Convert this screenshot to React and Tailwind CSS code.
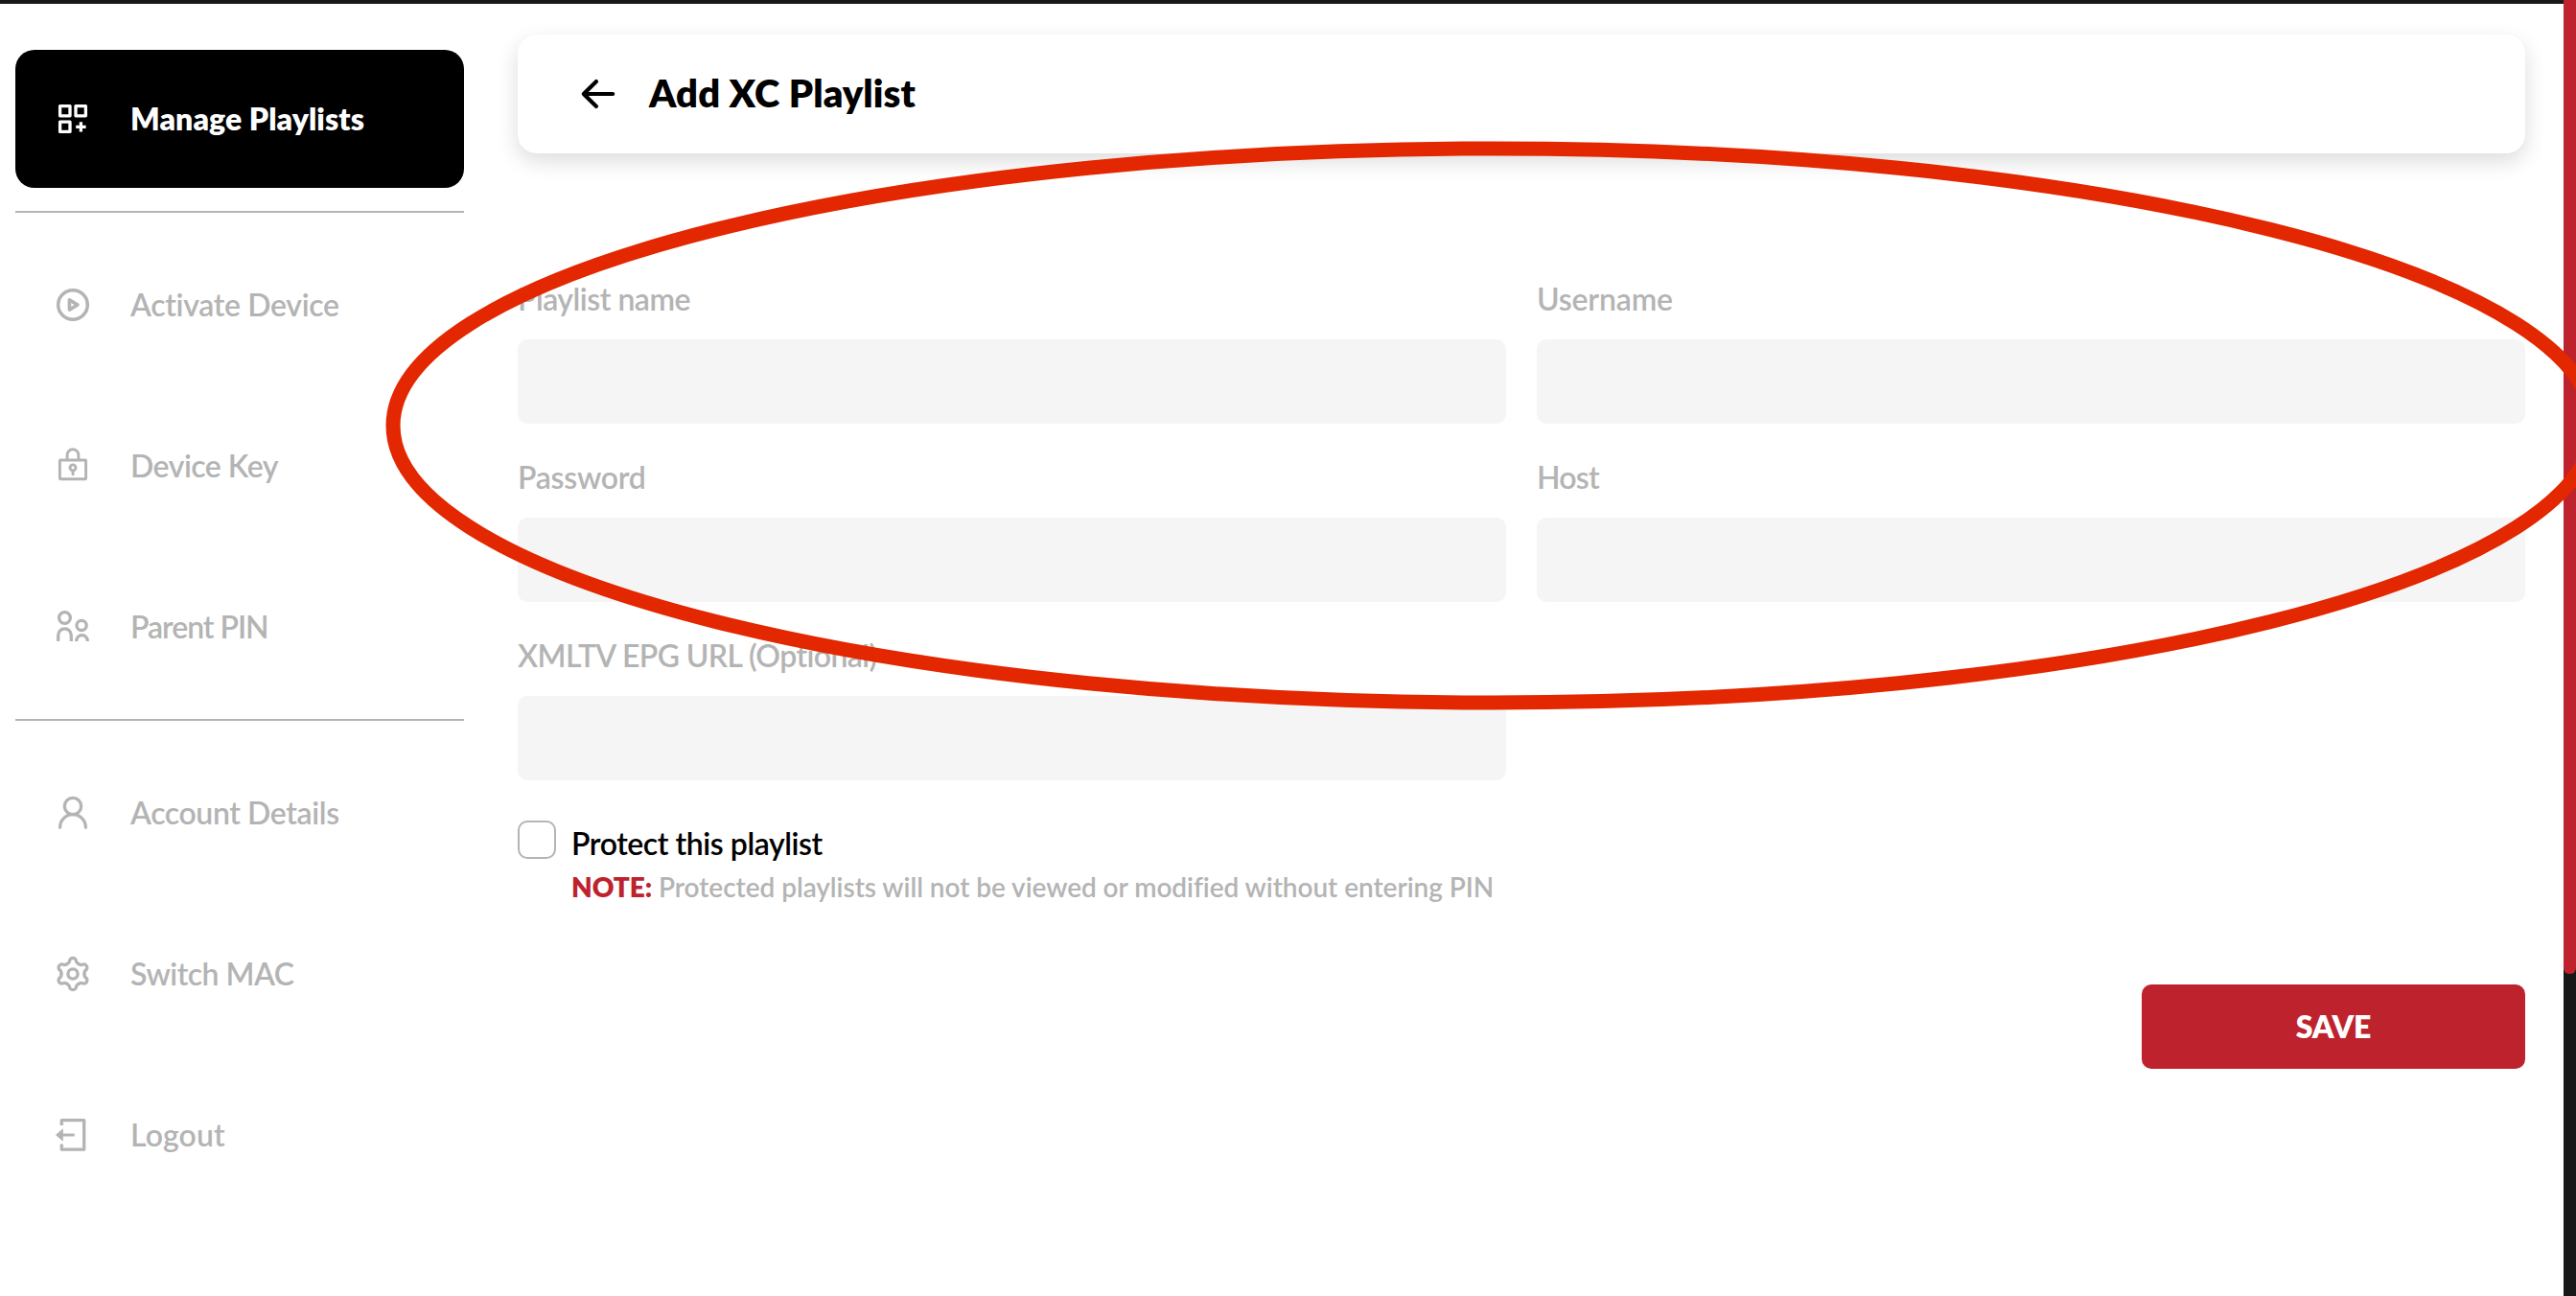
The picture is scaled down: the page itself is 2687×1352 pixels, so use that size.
import React from "react";

function Icon({ children, ...rest }) {
  return (
    <svg
      className="size-10 shrink-0 overflow-visible"
      viewBox="0 0 40 40"
      fill="none"
      stroke="currentColor"
      strokeWidth="3.3"
      strokeLinejoin="round"
      aria-hidden="true"
      {...rest}
    >
      {children}
    </svg>
  );
}

const PlaylistsIcon = () => (
  <Icon>
    <rect x="6.6" y="6.6" width="10.4" height="10.2" />
    <rect x="23" y="6.6" width="10.4" height="10.2" />
    <rect x="6.6" y="23.2" width="10.4" height="10.2" />
    <path d="M28.4 23.2v10.4M23.2 28.4h10.4" />
  </Icon>
);

const PlayIcon = () => (
  <Icon strokeWidth="3.5">
    <circle cx="20" cy="20" r="15.3" />
    <path d="M16.4 14.9v10.2L25 20z" strokeWidth="3.6" />
  </Icon>
);

const LockIcon = () => (
  <Icon strokeWidth="2.9">
    <rect x="6.4" y="14" width="27.2" height="19.7" rx="0.6" />
    <path d="M14.1 14V8.7a5.9 5.9 0 0 1 11.8 0V14" />
    <circle cx="20" cy="21.9" r="3" />
    <path d="M20 24.9v4" strokeLinecap="round" />
  </Icon>
);

const ParentsIcon = () => (
  <Icon>
    <circle cx="11.5" cy="10.5" r="5.9" />
    <circle cx="29.1" cy="18.4" r="5.1" />
    <path d="M4.7 35v-6.3a6.8 6.8 0 0 1 13.6 0V35" />
    <path d="M23.7 35v-.6a5.8 5.8 0 0 1 11.6 0v.6" />
  </Icon>
);

const AccountIcon = () => (
  <Icon strokeLinecap="round">
    <circle cx="20" cy="13" r="8.7" />
    <path d="M6.6 35.2a13.4 13.5 0 0 1 26.8 0" />
  </Icon>
);

const GearIcon = () => (
  <Icon strokeLinecap="round">
    <circle cx="20" cy="20" r="5.1" />
    {[0, 60, 120, 180, 240, 300].map((angle) => (
      <path
        key={angle}
        transform={`rotate(${angle} 20 20)`}
        d="M14 9.6C15.9 8.5 16.6 8 16.6 6.6a3.4 3.2 0 0 1 6.8 0C23.4 8 24.1 8.5 26 9.6"
      />
    ))}
  </Icon>
);

const LogoutIcon = () => (
  <Icon>
    <path d="M8.3 10V4.6h23.4v30.6H8.3v-5.6" />
    <path d="M8 20h13.7" strokeWidth="3" />
    <path d="M2 20l7.8-6.8v13.6z" fill="currentColor" stroke="none" />
  </Icon>
);

const DEVICE_ITEMS = [
  { label: "Activate Device", icon: PlayIcon, tracking: "tracking-[-0.34px]" },
  { label: "Device Key", icon: LockIcon, tracking: "tracking-[-0.52px]" },
  { label: "Parent PIN", icon: ParentsIcon, tracking: "tracking-[-1.05px]" },
];

const ACCOUNT_ITEMS = [
  { label: "Account Details", icon: AccountIcon, tracking: "tracking-[-0.4px]" },
  { label: "Switch MAC", icon: GearIcon, tracking: "tracking-[-0.52px]" },
  { label: "Logout", icon: LogoutIcon, tracking: "tracking-[0.1px]" },
];

const FIELDS = [
  { label: "Playlist name", tracking: "tracking-[-0.5px]" },
  { label: "Username", tracking: "tracking-[-0.18px]" },
  { label: "Password", tracking: "tracking-[-0.28px]" },
  { label: "Host", tracking: "tracking-[-0.8px]" },
  { label: "XMLTV EPG URL (Optional)", tracking: "tracking-[-0.6px]" },
];

function NavItem({ label, icon: ItemIcon, tracking, active }) {
  return (
    <a
      className={`flex h-36 shrink-0 items-center gap-10 rounded-[20px] px-10 text-[32px] leading-10 ${
        active ? "bg-black font-extrabold text-white" : "font-semibold text-[#b4b4b4]"
      }`}
    >
      <ItemIcon />
      <span className={`whitespace-nowrap pb-px ${tracking}`}>{label}</span>
    </a>
  );
}

const Divider = () => <hr className="h-0.5 shrink-0 border-0 bg-[#b4b4b4]" />;

function Sidebar() {
  return (
    <nav className="flex w-[468px] shrink-0 flex-col gap-6 pt-12">
      <NavItem label="Manage Playlists" icon={PlaylistsIcon} tracking="tracking-[0.08px]" active />
      <Divider />
      {DEVICE_ITEMS.map((item) => (
        <NavItem key={item.label} {...item} />
      ))}
      <Divider />
      {ACCOUNT_ITEMS.map((item) => (
        <NavItem key={item.label} {...item} />
      ))}
    </nav>
  );
}

function Header() {
  return (
    <header className="flex h-[124px] items-center gap-[33px] rounded-[20px] bg-white pl-16 shadow-[0_8px_22px_rgba(5,0,2,0.14)]">
      <svg
        className="size-10 shrink-0"
        viewBox="0 0 40 40"
        fill="none"
        stroke="currentColor"
        strokeWidth="4.2"
        strokeLinecap="round"
        strokeLinejoin="round"
        aria-hidden="true"
      >
        <path d="M35.2 20H4.8M18 7.1L4.8 20L18 32.9" />
      </svg>
      <h1 className="pb-[2px] text-[40px] leading-[48px] font-extrabold tracking-[0.07px]">Add XC Playlist</h1>
    </header>
  );
}

function Field({ label, tracking }) {
  return (
    <label className="flex flex-col gap-[22px] pt-0.5">
      <span className={`text-[32px] leading-10 font-semibold text-[#b4b4b4] ${tracking}`}>{label}</span>
      <input className="h-[88px] w-full rounded-[10px] bg-[#f5f5f5] px-6 text-[32px] outline-none" />
    </label>
  );
}

export default function App() {
  return (
    <div className="relative flex h-[1352px] w-[2687px] overflow-hidden bg-white font-['Lato',sans-serif] text-black">
      <div className="flex flex-1 flex-col border-t-4 border-[#181818]">
        <div className="flex flex-1 gap-14 pr-10 pl-4">
          <Sidebar />
          <main className="flex flex-1 flex-col pt-8">
            <Header />
            <form className="flex flex-col pt-[130px]">
              <div className="grid grid-cols-2 gap-x-8 gap-y-[34px]">
                {FIELDS.map((field) => (
                  <Field key={field.label} {...field} />
                ))}
              </div>
              <div className="flex gap-4 pt-[42px]">
                <span className="size-10 shrink-0 rounded-[10px] border-2 border-[#b4b4b4] bg-white" />
                <div className="flex flex-col gap-[5px] pt-1">
                  <p className="text-[32px] leading-10 font-semibold tracking-[-0.44px]">Protect this playlist</p>
                  <p className="flex text-[28px] leading-10 font-semibold text-[#b4b4b4]">
                    <span className="w-[91px] font-extrabold tracking-[-0.1px] text-[#be232d]">NOTE:</span>
                    <span className="tracking-[-0.05px]">
                      Protected playlists will not be viewed or modified without entering PIN
                    </span>
                  </p>
                </div>
              </div>
              <button
                type="button"
                className="mt-[82px] flex h-[88px] w-[400px] items-center justify-center self-end rounded-[10px] bg-[#be232d] pb-px text-[32px] font-extrabold tracking-[-0.2px] text-white"
              >
                SAVE
              </button>
            </form>
          </main>
        </div>
      </div>
      <div className="w-[13px] shrink-0 bg-[#181818]">
        <div className="h-[1016px] rounded-b-[6px] bg-[#be232d]" />
      </div>
      <svg
        className="pointer-events-none absolute inset-0 size-full"
        viewBox="0 0 2687 1352"
        fill="none"
        aria-hidden="true"
      >
        <ellipse cx="1557.5" cy="444" rx="1147.5" ry="289" stroke="#e32700" strokeWidth="15" />
      </svg>
    </div>
  );
}
